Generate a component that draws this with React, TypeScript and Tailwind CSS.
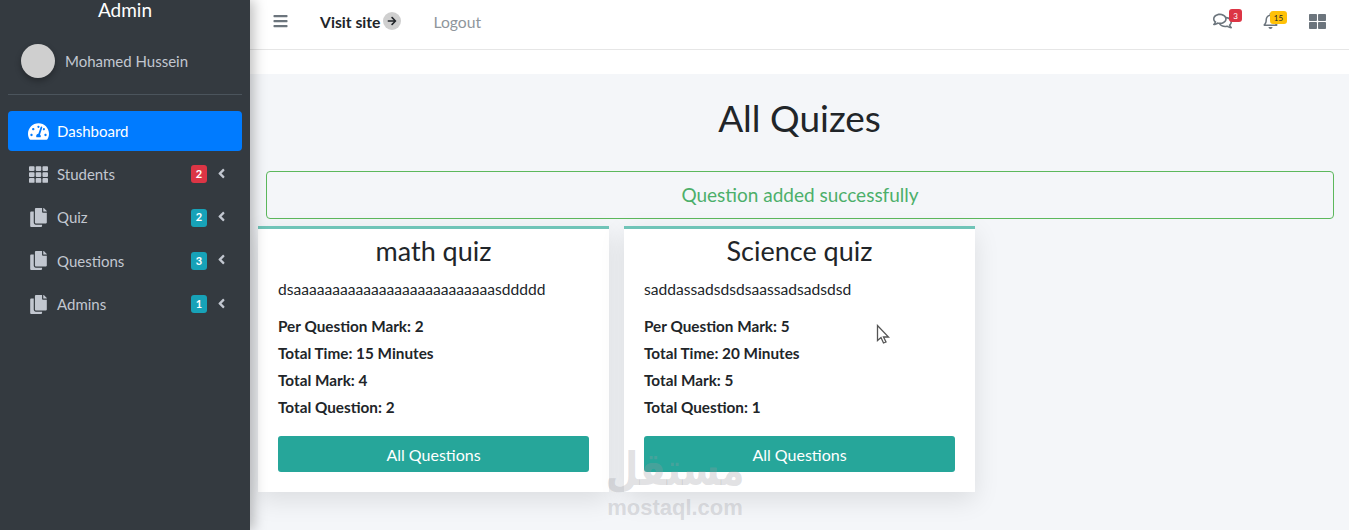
import { FaAngleLeft, FaArrowRight, FaBars, FaCopy, FaRegBell, FaRegComments, FaTachometerAlt, FaTh, FaThLarge } from "react-icons/fa";
import type { IconType } from "react-icons";

const menu: { label: string; icon: IconType; count: number; badge: string }[] = [
  { label: "Students", icon: FaTh, count: 2, badge: "bg-[#dc3545]" },
  { label: "Quiz", icon: FaCopy, count: 2, badge: "bg-[#17a2b8]" },
  { label: "Questions", icon: FaCopy, count: 3, badge: "bg-[#17a2b8]" },
  { label: "Admins", icon: FaCopy, count: 1, badge: "bg-[#17a2b8]" },
];

const quizzes = [
  { title: "math quiz", text: "dsaaaaaaaaaaaaaaaaaaaaaaaaaasddddd", mark: 2, time: 15, total: 4, questions: 2 },
  { title: "Science quiz", text: "saddassadsdsdsaassadsadsdsd", mark: 5, time: 20, total: 5, questions: 1 },
];

function Sidebar() {
  return (
    <aside className="z-10 flex h-[530px] w-[250px] shrink-0 flex-col overflow-hidden bg-[#343a40] px-2 shadow-[4px_0_12px_rgba(0,0,0,0.25)]">
      <div className="h-[22px] text-center text-[19px] leading-[20px] text-white">Admin</div>
      <div className="mt-[22px] flex h-[51px] items-start border-b border-[#4b545c] pl-[13px]">
        <div className="h-[34px] w-[34px] rounded-full bg-[#cfcfcf] shadow-[0_3px_6px_rgba(0,0,0,0.3)]" />
        <span className="ml-[10px] text-[15px] leading-[35px] text-[#c2c7d0]">Mohamed Hussein</span>
      </div>
      <nav className="mt-4 flex flex-col">
        <a className="flex h-10 items-center rounded bg-[#007bff] pl-5 text-[15px] text-white">
          <FaTachometerAlt className="h-[21px] w-[21px]" />
          <span className="ml-2">Dashboard</span>
        </a>
        <div className="mt-[1.5px] flex flex-col">
          {menu.map((m) => (
            <a key={m.label} className="flex h-[43.4px] items-center pl-5 text-[15px] text-[#c2c7d0]">
              <span className="flex w-5 justify-center">
                <m.icon className="h-[19px] w-[19px]" />
              </span>
              <span className="ml-[9px] flex-1">{m.label}</span>
              <span className={`flex h-[18px] w-4 items-center justify-center rounded-[3px] text-[11px] font-bold text-white ${m.badge}`}>
                {m.count}
              </span>
              <FaAngleLeft className="ml-[9px] mr-[15px] h-[15px] w-[11px] -translate-y-px" />
            </a>
          ))}
        </div>
      </nav>
    </aside>
  );
}

function Navbar() {
  return (
    <header className="flex h-[50px] items-center border-b border-[#e6e6e6] bg-white pb-[7px] pl-[23px] pr-[23px] text-[15.7px]">
      <FaBars className="h-4 w-[15px] text-[#6c757d]" />
      <span className="ml-[32px] pt-[3px] font-bold text-[#212529]">Visit site</span>
      <span className="ml-[3px] flex h-[18px] w-[18px] items-center justify-center rounded-full bg-[#cfcfcf]">
        <FaArrowRight className="h-[10px] w-[10px] text-[#212529]" />
      </span>
      <span className="ml-[32px] pt-[3px] text-[#8f969c]">Logout</span>
      <div className="ml-auto flex items-center">
        <div className="relative">
          <FaRegComments className="h-[18px] w-[19px] text-[#6c757d]" />
          <span className="absolute -right-[10px] -top-[3px] flex h-[13px] w-[13px] items-center justify-center rounded-[3px] bg-[#dc3545] text-[8px] text-white">3</span>
        </div>
        <div className="relative ml-[31px]">
          <FaRegBell className="h-[16px] w-[15px] text-[#6c757d]" />
          <span className="absolute -right-[9px] -top-[2px] flex h-[13px] w-[17px] items-center justify-center rounded-[3px] bg-[#ffc107] text-[8px] text-[#212529]">15</span>
        </div>
        <FaThLarge className="ml-[31px] h-[17px] w-[17px] text-[#6c757d]" />
      </div>
    </header>
  );
}

function QuizCard({ quiz }: { quiz: (typeof quizzes)[number] }) {
  return (
    <div className="flex h-[266px] w-[351px] flex-col border-t-[3px] border-[#70c4b8] bg-white px-5 shadow-[0_8px_24px_rgba(0,0,0,0.1)]">
      <h2 className="mt-[4px] text-center text-[27px] leading-[36px] text-[#212529]">{quiz.title}</h2>
      <p className="mt-[8px] h-[27px] text-[15.6px] leading-[24px] text-[#212529]">{quiz.text}</p>
      <div className="mt-[9px] flex flex-col text-[15.3px] font-bold leading-[27px] text-[#212529]">
        <span>Per Question Mark: {quiz.mark}</span>
        <span>Total Time: {quiz.time} Minutes</span>
        <span>Total Mark: {quiz.total}</span>
        <span>Total Question: {quiz.questions}</span>
      </div>
      <button className="mt-[15px] h-[36px] rounded-[3px] bg-[#26a69a] pt-px text-[16px] text-white">All Questions</button>
    </div>
  );
}

export default function App() {
  return (
    <div className="relative flex h-[530px] w-[1349px] overflow-hidden bg-white font-['Lato','Noto_Sans',sans-serif]">
      <Sidebar />
      <main className="flex min-w-0 flex-1 flex-col">
        <Navbar />
        <section className="mt-[24px] flex-1 bg-[#f4f6f9] px-2">
          <h1 className="mt-[20px] h-[48px] text-center text-[37px] leading-[48px] text-[#212529]">All Quizes</h1>
          <div className="ml-2 mr-[7px] mt-[29px] flex h-[48px] items-center justify-center rounded border border-[#5cb85c] text-[19px] text-[#4caf6a]">
            Question added successfully
          </div>
          <div className="mt-[7px] flex gap-[15px]">
            {quizzes.map((q) => (
              <QuizCard key={q.title} quiz={q} />
            ))}
          </div>
        </section>
      </main>

      {/* mouse pointer caught in the capture */}
      <svg className="absolute left-[876px] top-[324px]" width="15" height="22" viewBox="0 0 15 22" fill="#fff" stroke="#555" strokeWidth="1.3">
        <path d="M1.5 1.5v15l3.5-3 2.5 5.5 2.5-1-2.5-5h5z" />
      </svg>

      {/* mostaql watermark */}
      <div className="pointer-events-none absolute left-[600px] top-[452px] flex w-[150px] flex-col items-center text-[#9a9aa0]/30">
        <span className="origin-bottom scale-y-[1.2] font-['DejaVu_Sans',sans-serif] text-[38px] font-bold leading-[44px]">مستقل</span>
        <span className="font-['Liberation_Sans',sans-serif] text-[22px] font-bold leading-[24px]">mostaql.com</span>
      </div>
    </div>
  );
}
